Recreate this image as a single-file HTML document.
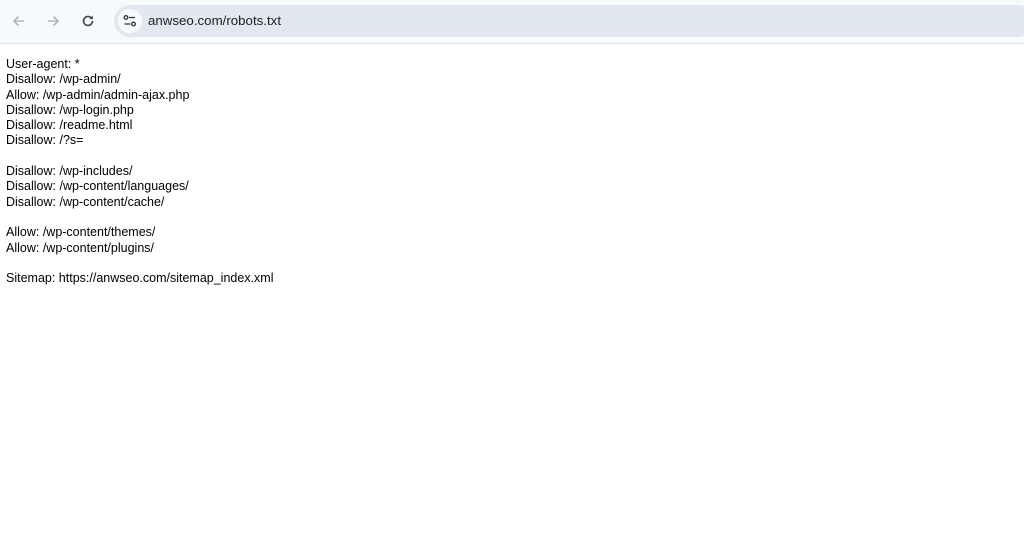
<!DOCTYPE html>
<html><head><style>
html,body{margin:0;padding:0;width:1024px;height:550px;overflow:hidden;background:#fff;}
.bar{position:absolute;left:0;top:0;width:1024px;height:43px;background:#f7fafd;border-bottom:1px solid #dfe3e8;}
.omni{position:absolute;left:114px;top:5px;width:920px;height:32px;border-radius:16px;background:#e2e8f0;}
.tune{position:absolute;left:118px;top:9px;width:24px;height:24px;border-radius:12px;background:#f7fafd;}
.url{position:absolute;left:148px;top:13px;font:13.3px "Liberation Sans",sans-serif;color:#1f1f1f;}
pre{position:absolute;left:6px;top:57px;margin:0;font:12.5px/15.3px "Liberation Sans",sans-serif;color:#000;}
svg{position:absolute;}
</style></head><body>
<div class="bar">
<svg style="left:10px;top:12px" width="18" height="18" viewBox="0 0 18 18"><path d="M14 9H4M8.5 4.5L4 9l4.5 4.5" stroke="#b0b4b9" stroke-width="1.6" fill="none"/></svg>
<svg style="left:44px;top:12px" width="18" height="18" viewBox="0 0 18 18"><path d="M4 9h10M9.5 4.5L14 9l-4.5 4.5" stroke="#b0b4b9" stroke-width="1.6" fill="none"/></svg>
<svg style="left:79px;top:12px" width="18" height="18" viewBox="0 0 18 18"><path d="M13.5 9a4.5 4.5 0 1 1-1.3-3.2" stroke="#444" stroke-width="1.6" fill="none"/><path d="M13.8 3.5v3.6h-3.6z" fill="#444"/></svg>
<div class="omni"></div>
<div class="tune"></div>
<svg style="left:122px;top:13px" width="16" height="16" viewBox="0 0 16 16"><circle cx="4" cy="4.5" r="1.8" stroke="#333" stroke-width="1.3" fill="none"/><path d="M7 4.5h6M2.5 11h6" stroke="#333" stroke-width="1.3"/><circle cx="11.5" cy="11" r="1.8" stroke="#333" stroke-width="1.3" fill="none"/></svg>
<div class="url">anwseo.com/robots.txt</div>
</div>
<pre>User-agent: *
Disallow: /wp-admin/
Allow: /wp-admin/admin-ajax.php
Disallow: /wp-login.php
Disallow: /readme.html
Disallow: /?s=

Disallow: /wp-includes/
Disallow: /wp-content/languages/
Disallow: /wp-content/cache/

Allow: /wp-content/themes/
Allow: /wp-content/plugins/

Sitemap: https://anwseo.com/sitemap_index.xml</pre>
</body></html>
